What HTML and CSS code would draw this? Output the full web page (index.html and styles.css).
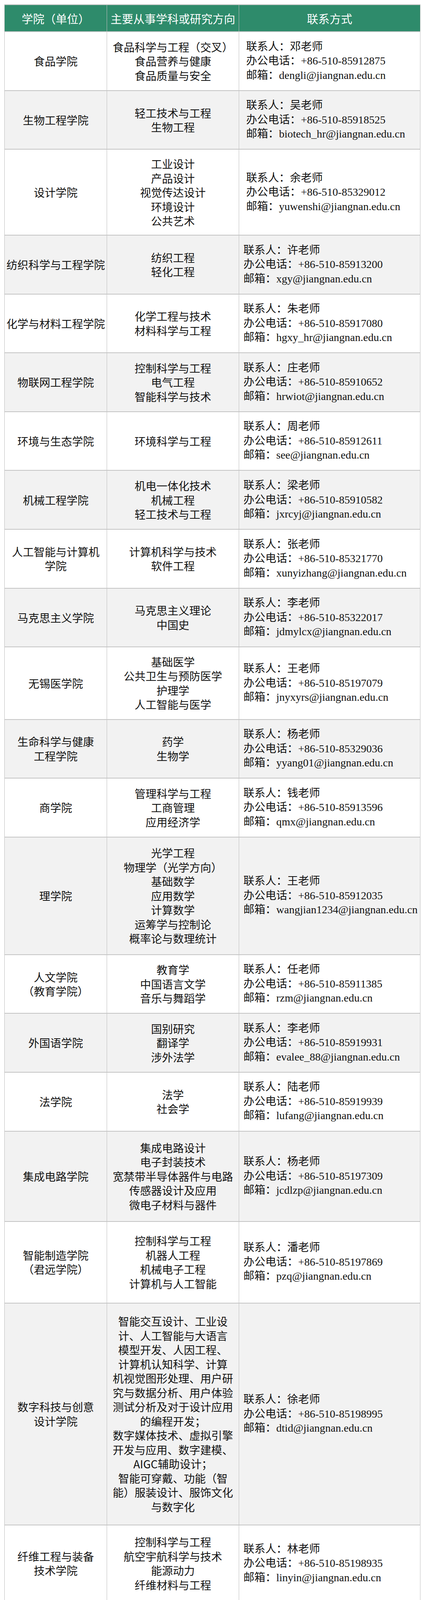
FILE: index.html
```html
<!DOCTYPE html>
<html lang="zh-CN">
<head>
<meta charset="utf-8">
<title>江南大学 学院联系方式</title>
<link rel="stylesheet" href="styles.css">
</head>
<body>
<div class="page">
<table class="contacts">
  <colgroup>
    <col class="c-unit">
    <col class="c-field">
    <col class="c-contact">
  </colgroup>
  <thead>
    <tr class="head-row">
      <th>学院（单位）</th>
      <th>主要从事学科或研究方向</th>
      <th>联系方式</th>
    </tr>
  </thead>
  <tbody>
    <tr>
      <td class="unit">食品学院</td>
      <td class="field">食品科学与工程（交叉）<br>食品营养与健康<br>食品质量与安全</td>
      <td class="contact wide">联系人：邓老师<br>办公电话：+86-510-85912875<br>邮箱：dengli@jiangnan.edu.cn</td>
    </tr>
    <tr>
      <td class="unit">生物工程学院</td>
      <td class="field">轻工技术与工程<br>生物工程</td>
      <td class="contact wide">联系人：吴老师<br>办公电话：+86-510-85918525<br>邮箱：biotech_hr@jiangnan.edu.cn</td>
    </tr>
    <tr class="r220">
      <td class="unit">设计学院</td>
      <td class="field">工业设计<br>产品设计<br>视觉传达设计<br>环境设计<br>公共艺术</td>
      <td class="contact wide">联系人：余老师<br>办公电话：+86-510-85329012<br>邮箱：yuwenshi@jiangnan.edu.cn</td>
    </tr>
    <tr>
      <td class="unit">纺织科学与工程学院</td>
      <td class="field">纺织工程<br>轻化工程</td>
      <td class="contact">联系人：许老师<br>办公电话：+86-510-85913200<br>邮箱：xgy@jiangnan.edu.cn</td>
    </tr>
    <tr>
      <td class="unit">化学与材料工程学院</td>
      <td class="field">化学工程与技术<br>材料科学与工程</td>
      <td class="contact">联系人：朱老师<br>办公电话：+86-510-85917080<br>邮箱：hgxy_hr@jiangnan.edu.cn</td>
    </tr>
    <tr>
      <td class="unit">物联网工程学院</td>
      <td class="field">控制科学与工程<br>电气工程<br>智能科学与技术</td>
      <td class="contact">联系人：庄老师<br>办公电话：+86-510-85910652<br>邮箱：hrwiot@jiangnan.edu.cn</td>
    </tr>
    <tr>
      <td class="unit">环境与生态学院</td>
      <td class="field">环境科学与工程</td>
      <td class="contact">联系人：周老师<br>办公电话：+86-510-85912611<br>邮箱：see@jiangnan.edu.cn</td>
    </tr>
    <tr>
      <td class="unit">机械工程学院</td>
      <td class="field">机电一体化技术<br>机械工程<br>轻工技术与工程</td>
      <td class="contact">联系人：梁老师<br>办公电话：+86-510-85910582<br>邮箱：jxrcyj@jiangnan.edu.cn</td>
    </tr>
    <tr>
      <td class="unit">人工智能与计算机<br>学院</td>
      <td class="field">计算机科学与技术<br>软件工程</td>
      <td class="contact">联系人：张老师<br>办公电话：+86-510-85321770<br>邮箱：xunyizhang@jiangnan.edu.cn</td>
    </tr>
    <tr>
      <td class="unit">马克思主义学院</td>
      <td class="field">马克思主义理论<br>中国史</td>
      <td class="contact">联系人：李老师<br>办公电话：+86-510-85322017<br>邮箱：jdmylcx@jiangnan.edu.cn</td>
    </tr>
    <tr class="r185">
      <td class="unit">无锡医学院</td>
      <td class="field">基础医学<br>公共卫生与预防医学<br>护理学<br>人工智能与医学</td>
      <td class="contact">联系人：王老师<br>办公电话：+86-510-85197079<br>邮箱：jnyxyrs@jiangnan.edu.cn</td>
    </tr>
    <tr>
      <td class="unit">生命科学与健康<br>工程学院</td>
      <td class="field">药学<br>生物学</td>
      <td class="contact">联系人：杨老师<br>办公电话：+86-510-85329036<br>邮箱：yyang01@jiangnan.edu.cn</td>
    </tr>
    <tr>
      <td class="unit">商学院</td>
      <td class="field">管理科学与工程<br>工商管理<br>应用经济学</td>
      <td class="contact">联系人：钱老师<br>办公电话：+86-510-85913596<br>邮箱：qmx@jiangnan.edu.cn</td>
    </tr>
    <tr class="r301">
      <td class="unit">理学院</td>
      <td class="field">光学工程<br>物理学（光学方向）<br>基础数学<br>应用数学<br>计算数学<br>运筹学与控制论<br>概率论与数理统计</td>
      <td class="contact">联系人：王老师<br>办公电话：+86-510-85912035<br>邮箱：wangjian1234@jiangnan.edu.cn</td>
    </tr>
    <tr>
      <td class="unit">人文学院<br>（教育学院）</td>
      <td class="field">教育学<br>中国语言文学<br>音乐与舞蹈学</td>
      <td class="contact">联系人：任老师<br>办公电话：+86-510-85911385<br>邮箱：rzm@jiangnan.edu.cn</td>
    </tr>
    <tr>
      <td class="unit">外国语学院</td>
      <td class="field">国别研究<br>翻译学<br>涉外法学</td>
      <td class="contact">联系人：李老师<br>办公电话：+86-510-85919931<br>邮箱：evalee_88@jiangnan.edu.cn</td>
    </tr>
    <tr>
      <td class="unit">法学院</td>
      <td class="field">法学<br>社会学</td>
      <td class="contact">联系人：陆老师<br>办公电话：+86-510-85919939<br>邮箱：lufang@jiangnan.edu.cn</td>
    </tr>
    <tr class="r231">
      <td class="unit">集成电路学院</td>
      <td class="field">集成电路设计<br>电子封装技术<br>宽禁带半导体器件与电路<br>传感器设计及应用<br>微电子材料与器件</td>
      <td class="contact">联系人：杨老师<br>办公电话：+86-510-85197309<br>邮箱：jcdlzp@jiangnan.edu.cn</td>
    </tr>
    <tr class="r209">
      <td class="unit">智能制造学院<br>（君远学院）</td>
      <td class="field">控制科学与工程<br>机器人工程<br>机械电子工程<br>计算机与人工智能</td>
      <td class="contact">联系人：潘老师<br>办公电话：+86-510-85197869<br>邮箱：pzq@jiangnan.edu.cn</td>
    </tr>
    <tr class="r568">
      <td class="unit">数字科技与创意<br>设计学院</td>
      <td class="field">智能交互设计、工业设<br>计、人工智能与大语言<br>模型开发、人因工程、<br>计算机认知科学、计算<br>机视觉图形处理、用户研<br>究与数据分析、用户体验<br>测试分析及对于设计应用<br>的编程开发；<br>数字媒体技术、虚拟引擎<br>开发与应用、数字建模、<br>AIGC辅助设计；<br>智能可穿戴、功能（智<br>能）服装设计、服饰文化<br>与数字化</td>
      <td class="contact">联系人：徐老师<br>办公电话：+86-510-85198995<br>邮箱：dtid@jiangnan.edu.cn</td>
    </tr>
    <tr class="r196">
      <td class="unit">纤维工程与装备<br>技术学院</td>
      <td class="field">控制科学与工程<br>航空宇航科学与技术<br>能源动力<br>纤维材料与工程</td>
      <td class="contact">联系人：林老师<br>办公电话：+86-510-85198935<br>邮箱：linyin@jiangnan.edu.cn</td>
    </tr>
    <tr>
      <td class="unit">体育部</td>
      <td class="field">体育教育学<br>运动训练学<br>重点项目：足球、羽毛球</td>
      <td class="contact">联系人：黄老师<br>办公电话：+86-510-85919361<br>邮箱：tyb@jiangnan.edu.cn</td>
    </tr>
  </tbody>
</table>
</div>
</body>
</html>
```
FILE: styles.css
```css
html, body {
  margin: 0;
  padding: 0;
  background: #ffffff;
}

.page {
  padding: 11px 5px 0 11px;
}

.contacts {
  border-collapse: collapse;
  table-layout: fixed;
  width: 1064px;
  color: #111111;
}

.c-unit { width: 262px; }
.c-field { width: 338px; }
.c-contact { width: 464px; }

.head-row {
  height: 69.3px;
}

.contacts th {
  background: #2e8b6b;
  color: #ffffff;
  font-family: "Noto Sans CJK SC", sans-serif;
  font-weight: 400;
  font-size: 29px;
  line-height: 36px;
  text-align: center;
  vertical-align: middle;
  padding: 0;
  white-space: nowrap;
  border-top: 2px solid #c4c4c4;
  border-bottom: 2px solid #c4c4c4;
  border-left: 1px solid #bdbdbd;
  border-right: 1px solid #bdbdbd;
}

.contacts tbody tr {
  height: 150.6px;
  background: #ffffff;
}

.contacts tbody tr:nth-child(even) {
  background: #f2f2f2;
}

.contacts td {
  font-size: 28px;
  line-height: 36.5px;
  vertical-align: middle;
  white-space: nowrap;
  border-top: 2px solid #c4c4c4;
  border-bottom: 2px solid #c4c4c4;
  border-left: 1px solid #bdbdbd;
  border-right: 1px solid #bdbdbd;
}

.unit,
.field {
  font-family: "Noto Sans CJK SC", sans-serif;
  text-align: center;
  padding: 0 2px;
}

.contact {
  font-family: "Liberation Serif", "Noto Sans CJK SC", serif;
  text-align: left;
  padding: 0 4px 0 11px;
}

.contact.wide {
  padding-left: 18px;
}

.contacts tbody tr.r185 { height: 185.3px; }
.contacts tbody tr.r196 { height: 196.3px; }
.contacts tbody tr.r209 { height: 209.3px; }
.contacts tbody tr.r220 { height: 219.6px; }
.contacts tbody tr.r231 { height: 231px; }
.contacts tbody tr.r301 { height: 301px; }
.contacts tbody tr.r568 { height: 568.4px; }
```
